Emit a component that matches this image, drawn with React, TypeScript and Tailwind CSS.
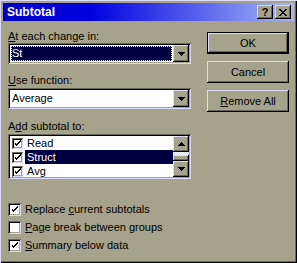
const face = 'bg-[#a5a38b]'
const raised =
  'shadow-[inset_-1px_-1px_0_#000,inset_1px_1px_0_#dcdcf8,inset_-2px_-2px_0_#6a6856]'
const sunken =
  'shadow-[inset_1px_1px_0_#6a6856,inset_-1px_-1px_0_#dcdcf8,inset_2px_2px_0_#000,inset_-2px_-2px_0_#a5a38b]'

function Check({ on, size = 13 }: { on: boolean; size?: number }) {
  return (
    <div
      className={`${sunken} bg-white flex items-center justify-center shrink-0`}
      style={{ width: size, height: size }}
    >
      {on && (
        <svg width="7" height="7" viewBox="0 0 7 7" shapeRendering="crispEdges">
          <path d="M0 2h1v3h1v1h1v-1h1v-1h1v-1h1v-1h1v-2h-1v1h-1v1h-1v1h-1v1h-1v-1h-1v-1z" fill="#000" />
        </svg>
      )}
    </div>
  )
}

function Arrow({ dir }: { dir: 'up' | 'down' }) {
  return (
    <svg width="7" height="4" viewBox="0 0 7 4" shapeRendering="crispEdges">
      {dir === 'down' ? (
        <path d="M0 0h7v1h-1v1h-1v1h-1v1h-1v-1h-1v-1h-1v-1h-1z" fill="#000" />
      ) : (
        <path d="M0 4h7v-1h-1v-1h-1v-1h-1v-1h-1v1h-1v1h-1v1h-1z" fill="#000" />
      )}
    </svg>
  )
}

function SmallBtn({ dir, h = 17 }: { dir: 'up' | 'down'; h?: number }) {
  return (
    <div className={`${face} ${raised} w-[16px] flex items-center justify-center shrink-0`} style={{ height: h }}>
      <Arrow dir={dir} />
    </div>
  )
}

function Combo({ value, focused }: { value: string; focused?: boolean }) {
  return (
    <div className={`${sunken} bg-white h-[21px] w-full flex p-[2px]`}>
      <div className="flex-1 p-px flex">
        {focused ? (
          <div className="flex-1 bg-[#000040] text-white outline outline-1 outline-dotted outline-[#e8e8a0] -outline-offset-1 flex items-center pl-[1px]">
            {value}
          </div>
        ) : (
          <div className="flex-1 flex items-center pl-[1px]">{value}</div>
        )}
      </div>
      <SmallBtn dir="down" />
    </div>
  )
}

function Btn({ children, isDefault }: { children: React.ReactNode; isDefault?: boolean }) {
  return (
    <div className={`h-[22px] ${isDefault ? 'border border-black' : ''}`}>
      <div className={`${face} ${raised} h-full flex items-center justify-center`}>{children}</div>
    </div>
  )
}

const items = [
  { name: 'Read', sel: false },
  { name: 'Struct', sel: true },
  { name: 'Avg', sel: false },
]

export default function App() {
  return (
    <div
      className={`${face} w-[297px] h-[263px] p-[3px] flex flex-col text-black text-[11px] leading-[13px] shadow-[inset_1px_1px_0_#dcdcf8,inset_-1px_-1px_0_#000,inset_-2px_-2px_0_#6a6856]`}
      style={{ fontFamily: '"Liberation Sans", Arial, sans-serif' }}
    >
      <div className="h-[18px] flex items-center pl-[4px] pr-[3px] bg-[linear-gradient(to_right,#0000c8,#0000e0_30%,#a8b8f8)]">
        <span className="text-white font-bold text-[12px] flex-1">Subtotal</span>
        <div className={`${face} ${raised} w-[16px] h-[14px] flex items-center justify-center font-bold text-[11px] leading-none`}>?</div>
        <div className={`${face} ${raised} w-[16px] h-[14px] ml-[2px] flex items-center justify-center`}>
          <svg width="8" height="7" viewBox="0 0 8 7" shapeRendering="crispEdges">
            <path d="M0 0h2v1h1v1h2v-1h1v-1h2v1h-1v1h-1v1h-1v1h1v1h1v1h1v1h-2v-1h-1v-1h-2v1h-1v1h-2v-1h1v-1h1v-1h1v-1h-1v-1h-1v-1h-1z" fill="#000" />
          </svg>
        </div>
      </div>

      <div className="flex flex-1 pl-[5px]">
        <div className="w-[183px] flex flex-col">
          <div className="mt-[9px]"><u>A</u>t each change in:</div>
          <Combo value="St" focused />
          <div className="mt-[10px]"><u>U</u>se function:</div>
          <div className="mt-px"><Combo value="Average" /></div>
          <div className="mt-[11px]">A<u>d</u>d subtotal to:</div>
          <div className={`${sunken} bg-white mt-px h-[45px] p-[2px] flex`}>
            <div className="flex-1 flex flex-col overflow-hidden">
              {items.map((it) => (
                <div key={it.name} className="h-[14px] flex items-center shrink-0">
                  <div className="ml-[2px]"><Check on size={11} /></div>
                  <div className={`ml-[2px] flex-1 h-full flex items-center pl-[2px] ${it.sel ? 'bg-[#000040] text-white' : ''}`}>
                    {it.name}
                  </div>
                </div>
              ))}
            </div>
            <div className="w-[16px] flex flex-col">
              <SmallBtn dir="up" h={16} />
              <div className="flex-1 bg-[repeating-conic-gradient(#dcdcf8_0_25%,#ffffff_0_50%)] bg-[length:2px_2px] flex flex-col justify-end">
                <div className={`${face} ${raised} h-[6px]`} />
              </div>
              <SmallBtn dir="down" h={16} />
            </div>
          </div>

          <div className="mt-[24px] flex flex-col gap-[5px]">
            <div className="flex items-center gap-[4px] h-[13px]">
              <Check on />
              <span>Replace <u>c</u>urrent subtotals</span>
            </div>
            <div className="flex items-center gap-[4px] h-[13px]">
              <Check on={false} />
              <span><u>P</u>age break between groups</span>
            </div>
            <div className="flex items-center gap-[4px] h-[13px]">
              <Check on />
              <span><u>S</u>ummary below data</span>
            </div>
          </div>
        </div>

        <div className="w-[82px] ml-[16px] mt-[11px] flex flex-col gap-[7px]">
          <Btn isDefault>OK</Btn>
          <Btn>Cancel</Btn>
          <Btn><span><u>R</u>emove All</span></Btn>
        </div>
      </div>
    </div>
  )
}
